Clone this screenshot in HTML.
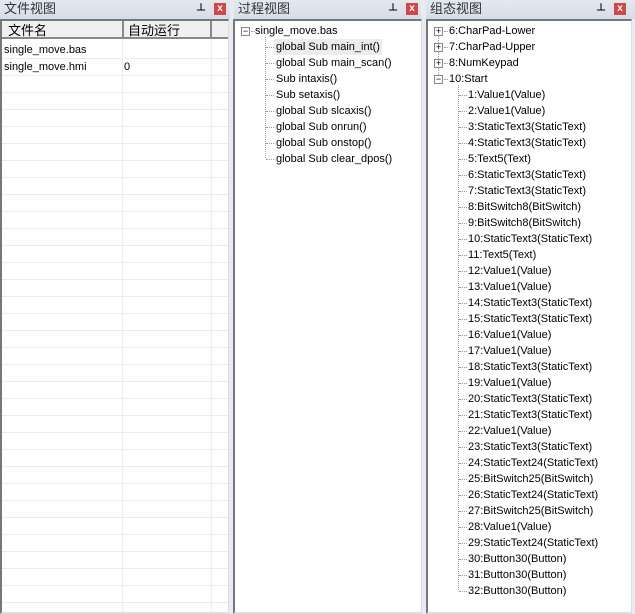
<!DOCTYPE html><html><head><meta charset="utf-8"><style>
*{margin:0;padding:0;box-sizing:border-box}
body{width:635px;height:614px;background:#e8ecf2;position:relative;overflow:hidden;font-family:Tahoma,"Liberation Sans","Noto Sans CJK SC",sans-serif;font-size:11px;color:#000}
.title{position:absolute;top:0;height:19px;background:linear-gradient(#e4e9f0,#d5dde8);font-size:13px;color:#333;line-height:18px;padding-left:4px;font-family:"Liberation Sans","Noto Sans CJK SC",sans-serif}
.pin{position:absolute;top:3px;width:10px;height:12px;font-size:10px;font-weight:bold;line-height:12px;text-align:center}
.x{position:absolute;top:3px;width:12px;height:12px;background:#d04848;color:#fff;font-size:10px;font-weight:bold;line-height:12px;text-align:center}
.box{position:absolute;top:19px;bottom:0;background:#fff;border-left:2px solid #777;border-top:2px solid #777;border-right:1px solid #ddd;border-bottom:2px solid #ddd}
.row{position:absolute;height:16px;line-height:16px;white-space:nowrap}
.hl{background:#ececec}
.pm{position:absolute;width:9px;height:9px;border:1px solid #888;background:#fff;font-size:9px;line-height:7px;text-align:center;color:#000}
.vl{position:absolute;border-left:1px dotted #999;width:0}
.hd{position:absolute;border-top:1px dotted #999;height:0}
</style></head><body>
<div class="title" style="left:0;width:230px">文件视图</div>
<div class="pin" style="left:196px">⊥</div><div class="x" style="left:214px">x</div>
<div class="title" style="left:234px;width:187px">过程视图</div>
<div class="pin" style="left:388px">⊥</div><div class="x" style="left:406px">x</div>
<div class="title" style="left:426px;width:209px">组态视图</div>
<div class="pin" style="left:596px">⊥</div><div class="x" style="left:614px">x</div>

<div class="box" style="left:0;width:229px;overflow:hidden">
<div style="position:absolute;left:0;top:0;width:240px;height:18px;background:#f0f0f0;border-bottom:2px solid #888"></div>
<div style="position:absolute;left:120px;top:0;height:18px;border-left:2px solid #888"></div>
<div style="position:absolute;left:208px;top:0;height:18px;border-left:2px solid #888"></div>
<div style="position:absolute;left:6px;top:1px;font-size:13px;line-height:17px;font-family:'Liberation Sans','Noto Sans CJK SC',sans-serif">文件名</div>
<div style="position:absolute;left:126px;top:1px;font-size:13px;line-height:17px;font-family:'Liberation Sans','Noto Sans CJK SC',sans-serif">自动运行</div>
<div id="grid"></div>
<div class="row" style="left:2px;top:21px">single_move.bas</div>
<div class="row" style="left:2px;top:38px">single_move.hmi</div>
<div class="row" style="left:122px;top:38px">0</div>
</div>

<div class="box" style="left:233px;width:189px">
<div class="pm" style="left:6px;top:6px">−</div>
<div class="hd" style="left:16px;top:10px;width:4px"></div>
<div class="row" style="left:20px;top:2px">single_move.bas</div>
<div class="vl" style="left:30px;top:16px;height:121px"></div>
<div id="p2"></div>
</div>

<div class="box" style="left:426px;width:206px">
<div class="vl" style="left:10px;top:12px;height:44px"></div>
<div id="p3"></div>
</div>
<script>
(function(){
var g='';for(var y=37;y<600;y+=17){g+='<div style="position:absolute;left:0;top:'+y+'px;width:240px;border-top:1px solid #ececec"></div>';}
g+='<div style="position:absolute;left:120px;top:18px;height:600px;border-left:1px solid #ececec"></div><div style="position:absolute;left:209px;top:18px;height:600px;border-left:1px solid #ececec"></div>';
document.getElementById('grid').innerHTML=g;
var p2=['global Sub main_int()','global Sub main_scan()','Sub intaxis()','Sub setaxis()','global Sub slcaxis()','global Sub onrun()','global Sub onstop()','global Sub clear_dpos()'];
var h='';p2.forEach(function(t,i){var y=18+i*16;h+='<div class="hd" style="left:31px;top:'+(y+8)+'px;width:8px"></div><div class="row'+(i==0?' hl':'')+'" style="left:39px;top:'+y+'px;padding:0 2px">'+t+'</div>';});
document.getElementById('p2').innerHTML=h;
var tops=['6:CharPad-Lower','7:CharPad-Upper','8:NumKeypad','10:Start'];
var ch=['1:Value1(Value)','2:Value1(Value)','3:StaticText3(StaticText)','4:StaticText3(StaticText)','5:Text5(Text)','6:StaticText3(StaticText)','7:StaticText3(StaticText)','8:BitSwitch8(BitSwitch)','9:BitSwitch8(BitSwitch)','10:StaticText3(StaticText)','11:Text5(Text)','12:Value1(Value)','13:Value1(Value)','14:StaticText3(StaticText)','15:StaticText3(StaticText)','16:Value1(Value)','17:Value1(Value)','18:StaticText3(StaticText)','19:Value1(Value)','20:StaticText3(StaticText)','21:StaticText3(StaticText)','22:Value1(Value)','23:StaticText3(StaticText)','24:StaticText24(StaticText)','25:BitSwitch25(BitSwitch)','26:StaticText24(StaticText)','27:BitSwitch25(BitSwitch)','28:Value1(Value)','29:StaticText24(StaticText)','30:Button30(Button)','31:Button30(Button)','32:Button30(Button)'];
h='';tops.forEach(function(t,i){var y=2+i*16;h+='<div class="pm" style="left:6px;top:'+(y+4)+'px">'+(i<3?'+':'−')+'</div><div class="hd" style="left:16px;top:'+(y+8)+'px;width:4px"></div><div class="row" style="left:21px;top:'+y+'px">'+t+'</div>';});
h+='<div class="vl" style="left:30px;top:64px;height:505px"></div>';
ch.forEach(function(t,i){var y=66+i*16;h+='<div class="hd" style="left:31px;top:'+(y+8)+'px;width:8px"></div><div class="row" style="left:40px;top:'+y+'px">'+t+'</div>';});
document.getElementById('p3').innerHTML=h;
})();
</script>
</body></html>
